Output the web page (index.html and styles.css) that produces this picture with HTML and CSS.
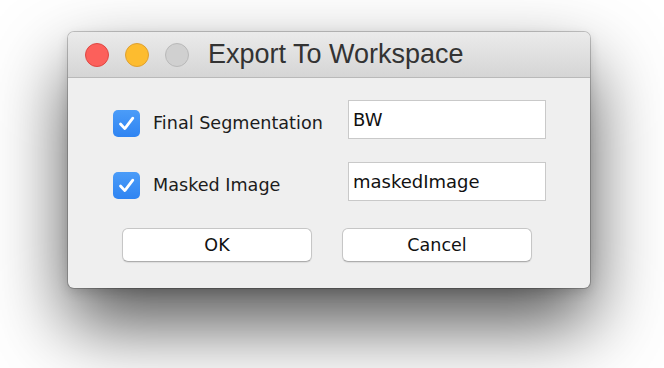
FILE: index.html
```html
<!DOCTYPE html>
<html>
<head>
<meta charset="utf-8">
<link rel="stylesheet" href="styles.css">
</head>
<body>
<div class="stage">
  <div class="window">
    <div class="titlebar">
      <span class="light red"></span>
      <span class="light yellow"></span>
      <span class="light gray"></span>
      <span class="title">Export To Workspace</span>
    </div>
    <div class="content">
      <div class="row">
        <div class="check-group">
          <span class="checkbox">
            <svg width="27" height="27" viewBox="0 0 27 27"><path d="M7.5 14 L11.8 18.6 L19.8 8.2" fill="none" stroke="#fff" stroke-width="2.8" stroke-linecap="round" stroke-linejoin="round"/></svg>
          </span>
          <span class="label">Final Segmentation</span>
        </div>
        <div class="field">BW</div>
      </div>
      <div class="row">
        <div class="check-group">
          <span class="checkbox">
            <svg width="27" height="27" viewBox="0 0 27 27"><path d="M7.5 14 L11.8 18.6 L19.8 8.2" fill="none" stroke="#fff" stroke-width="2.8" stroke-linecap="round" stroke-linejoin="round"/></svg>
          </span>
          <span class="label">Masked Image</span>
        </div>
        <div class="field">maskedImage</div>
      </div>
      <div class="buttons">
        <button class="btn">OK</button>
        <button class="btn">Cancel</button>
      </div>
    </div>
  </div>
</div>
</body>
</html>
```
FILE: styles.css
```css
html, body {
  margin: 0;
  padding: 0;
  background: #ffffff;
  overflow: hidden;
}
.stage {
  padding: 32px 0 0 68px;
  height: 368px;
  box-sizing: border-box;
}
.window {
  width: 522px;
  height: 256px;
  background: #efefef;
  border-radius: 6px;
  box-shadow: 0 0 0 1px rgba(0,0,0,0.2), 0 4px 12px rgba(0,0,0,0.14), 0 36px 75px rgba(0,0,0,0.68);
  overflow: hidden;
  display: flex;
  flex-direction: column;
  font-family: "DejaVu Sans", sans-serif;
}
.titlebar {
  height: 45px;
  border-bottom: 1px solid #b9b9b9;
  background: linear-gradient(#ebebeb, #d5d5d5);
  display: flex;
  align-items: center;
  padding-left: 17px;
  gap: 16px;
  flex: none;
}
.light {
  width: 22px;
  height: 22px;
  border-radius: 50%;
  flex: none;
}
.red { background: #fc605b; border: 1px solid #de4843; }
.yellow { background: #fdbc2f; border: 1px solid #dea032; }
.gray { background: #d0d0d0; border: 1px solid #b9b9b9; }
.title {
  font-family: "Liberation Sans", Arial, sans-serif;
  font-size: 27px;
  color: #333;
  margin-left: 3px;
}
.content {
  padding: 22px 0 0 45px;
  display: flex;
  flex-direction: column;
  gap: 23px;
}
.row {
  display: flex;
  align-items: center;
  height: 39px;
}
.check-group {
  display: flex;
  align-items: center;
  width: 235px;
  padding-top: 7px;
}
.checkbox {
  width: 27px;
  height: 27px;
  border-radius: 5px;
  background: linear-gradient(#4b9cf8, #2f84f2);
  display: flex;
  flex: none;
}
.label {
  margin-left: 13px;
  font-size: 17.6px;
  color: #1c1c1c;
}
.field {
  height: 37px;
  border: 1px solid #c9c9c9;
  background: #fff;
  font-size: 18px;
  color: #111;
  padding-left: 4px;
  box-sizing: content-box;
  display: flex;
  align-items: center;
  line-height: 1;
}
.row .field { width: 192px; }
.buttons {
  display: flex;
  gap: 30px;
  padding-left: 9px;
  margin-top: 4px;
}
.btn {
  width: 190px;
  height: 34px;
  background: #fff;
  border: 1px solid #c6c6c6;
  border-bottom-color: #adadad;
  border-radius: 6px;
  font-family: "DejaVu Sans", sans-serif;
  font-size: 17.5px;
  color: #111;
  padding: 0;
  box-shadow: 0 1px 1px rgba(0,0,0,0.08);
}
```
